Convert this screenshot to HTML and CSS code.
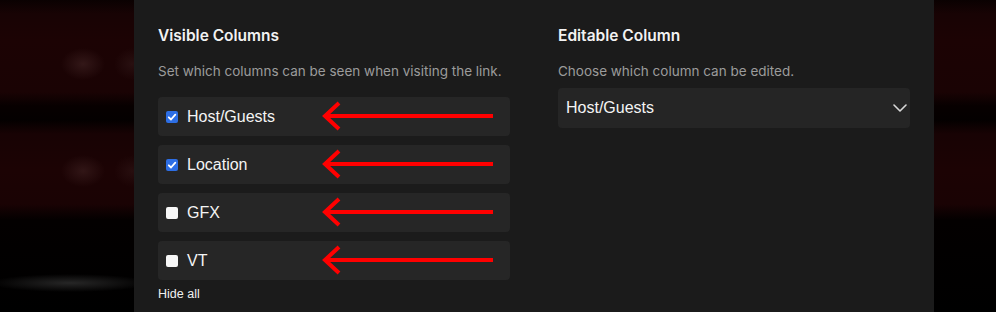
FILE: index.html
```html
<!DOCTYPE html>
<html lang="en">
<head>
  <meta charset="UTF-8" />
  <meta name="viewport" content="width=device-width, initial-scale=1.0" />
  <title>Share settings</title>
  <link rel="stylesheet" href="styles.css">
</head>
<body>
  <div class="backdrop">
    <div class="modal">
      <section class="column">
        <h2>Visible Columns</h2>
        <p class="hint">Set which columns can be seen when visiting the link.</p>

        <ul class="options">
          <li class="option">
            <span class="check on"><svg viewBox="0 0 12 12" width="12" height="12"><path d="M2.8 6.3 L5 8.5 L9.3 3.6" fill="none" stroke="#fff" stroke-width="1.8" stroke-linecap="round" stroke-linejoin="round"/></svg></span>
            <span class="label">Host/Guests</span>
            <svg class="arrow" viewBox="0 0 176 34" width="176" height="34"><path d="M173 17 H6" stroke="#f00" stroke-width="4"/><path d="M19 4 L5 17 L19 30" fill="none" stroke="#f00" stroke-width="4"/></svg>
          </li>
          <li class="option">
            <span class="check on"><svg viewBox="0 0 12 12" width="12" height="12"><path d="M2.8 6.3 L5 8.5 L9.3 3.6" fill="none" stroke="#fff" stroke-width="1.8" stroke-linecap="round" stroke-linejoin="round"/></svg></span>
            <span class="label">Location</span>
            <svg class="arrow" viewBox="0 0 176 34" width="176" height="34"><path d="M173 17 H6" stroke="#f00" stroke-width="4"/><path d="M19 4 L5 17 L19 30" fill="none" stroke="#f00" stroke-width="4"/></svg>
          </li>
          <li class="option">
            <span class="check"></span>
            <span class="label">GFX</span>
            <svg class="arrow" viewBox="0 0 176 34" width="176" height="34"><path d="M173 17 H6" stroke="#f00" stroke-width="4"/><path d="M19 4 L5 17 L19 30" fill="none" stroke="#f00" stroke-width="4"/></svg>
          </li>
          <li class="option">
            <span class="check"></span>
            <span class="label">VT</span>
            <svg class="arrow" viewBox="0 0 176 34" width="176" height="34"><path d="M173 17 H6" stroke="#f00" stroke-width="4"/><path d="M19 4 L5 17 L19 30" fill="none" stroke="#f00" stroke-width="4"/></svg>
          </li>
        </ul>

        <a class="hide-all">Hide all</a>
      </section>

      <section class="column">
        <h2>Editable Column</h2>
        <p class="hint">Choose which column can be edited.</p>

        <div class="select">
          <span class="label">Host/Guests</span>
          <svg class="chevron" viewBox="0 0 14 8" width="14" height="8"><path d="M1 1 L7 7 L13 1" fill="none" stroke="#d8d8d8" stroke-width="1.6" stroke-linecap="round" stroke-linejoin="round"/></svg>
        </div>
      </section>
    </div>
  </div>
</body>
</html>
```

FILE: styles.css
```css
html, body {
  margin: 0;
  padding: 0;
  height: 312px;
  overflow: hidden;
}
body {
  font-family: Inter, "Liberation Sans", sans-serif;
  background:
    radial-gradient(ellipse 22px 16px at 83px 64px, rgba(70, 40, 40, 0.55), transparent),
    radial-gradient(ellipse 18px 16px at 132px 64px, rgba(60, 35, 35, 0.4), transparent),
    radial-gradient(ellipse 22px 16px at 83px 171px, rgba(70, 40, 40, 0.5), transparent),
    radial-gradient(ellipse 18px 16px at 132px 171px, rgba(60, 35, 35, 0.35), transparent),
    radial-gradient(ellipse 80px 9px at 70px 283px, rgba(48, 48, 48, 0.8), transparent),
    linear-gradient(to bottom,
      #0a0101 0px, #180304 14px, #1c0304 40px, #1a0304 92px,
      #070000 106px, #040000 120px, #180304 134px, #1c0304 170px,
      #1a0304 204px, #030000 220px, #000 312px);
}
.backdrop {
  display: flex;
  padding-left: 134px;
  height: 312px;
}
.modal {
  width: 800px;
  box-sizing: border-box;
  padding: 25px 24px 0;
  background: #1b1b1b;
  display: grid;
  grid-template-columns: 352px 352px;
  gap: 48px;
  align-items: start;
}
.column h2 {
  margin: 0;
  font-size: 15.5px;
  line-height: 22px;
  font-weight: 600;
  color: #f2f2f2;
}
.hint {
  margin: 14px 0 0;
  font-size: 13.5px;
  line-height: 20px;
  color: #9b9b9b;
}
.options {
  list-style: none;
  margin: 16px 0 0;
  padding: 0;
  display: flex;
  flex-direction: column;
  gap: 9px;
}
.option {
  position: relative;
  height: 39px;
  display: flex;
  align-items: center;
  padding-left: 8px;
  background: #262626;
  border-radius: 4px;
}
.label {
  font-family: "Liberation Sans", Arial, sans-serif;
  font-size: 16px;
  color: #f4f4f4;
}
.check {
  width: 12px;
  height: 12px;
  margin-right: 9px;
  border-radius: 2px;
  background: #f7f7f7;
  display: flex;
  align-items: center;
  justify-content: center;
}
.check.on {
  background: #2d6ee4;
}
.arrow {
  position: absolute;
  left: 162px;
  top: 2px;
}
.hide-all {
  display: block;
  margin-top: 5px;
  font-family: "Liberation Sans", Arial, sans-serif;
  font-size: 12.5px;
  line-height: 18px;
  color: #f0f0f0;
}
.select {
  margin-top: 7px;
  height: 40px;
  box-sizing: border-box;
  padding: 0 3px 0 8px;
  display: flex;
  align-items: center;
  justify-content: space-between;
  background: #252525;
  border-radius: 4px;
}
```
